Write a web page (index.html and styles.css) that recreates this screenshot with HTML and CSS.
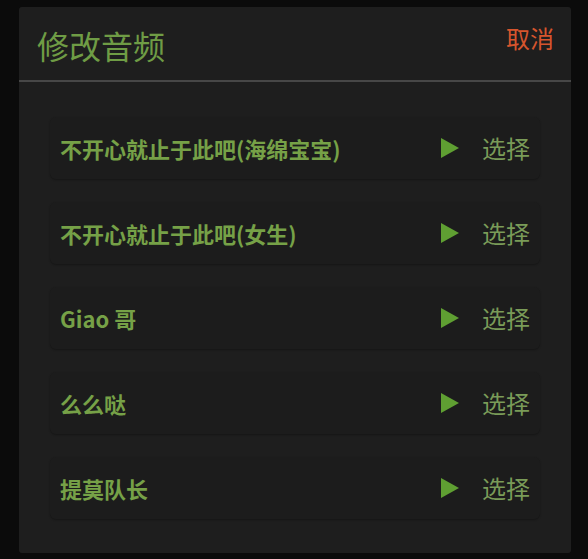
FILE: index.html
```html
<!DOCTYPE html>
<html lang="zh-CN">
<head>
<meta charset="utf-8">
<title>修改音频</title>
<link rel="stylesheet" href="styles.css">
</head>
<body>
<div class="dialog">
  <div class="dialog-header">
    <h1 class="dialog-title">修改音频</h1>
    <span class="dialog-cancel">取消</span>
  </div>
  <ul class="sound-list">
    <li class="sound-item">
      <span class="sound-name">不开心就止于此吧(海绵宝宝)</span>
      <span class="play"><svg width="18" height="20" viewBox="0 0 18 20"><path d="M0 0 L18 10 L0 20 Z" fill="#5f9f32"/></svg></span>
      <span class="choose">选择</span>
    </li>
    <li class="sound-item">
      <span class="sound-name">不开心就止于此吧(女生)</span>
      <span class="play"><svg width="18" height="20" viewBox="0 0 18 20"><path d="M0 0 L18 10 L0 20 Z" fill="#5f9f32"/></svg></span>
      <span class="choose">选择</span>
    </li>
    <li class="sound-item">
      <span class="sound-name">Giao 哥</span>
      <span class="play"><svg width="18" height="20" viewBox="0 0 18 20"><path d="M0 0 L18 10 L0 20 Z" fill="#5f9f32"/></svg></span>
      <span class="choose">选择</span>
    </li>
    <li class="sound-item">
      <span class="sound-name">么么哒</span>
      <span class="play"><svg width="18" height="20" viewBox="0 0 18 20"><path d="M0 0 L18 10 L0 20 Z" fill="#5f9f32"/></svg></span>
      <span class="choose">选择</span>
    </li>
    <li class="sound-item">
      <span class="sound-name">提莫队长</span>
      <span class="play"><svg width="18" height="20" viewBox="0 0 18 20"><path d="M0 0 L18 10 L0 20 Z" fill="#5f9f32"/></svg></span>
      <span class="choose">选择</span>
    </li>
  </ul>
</div>
</body>
</html>
```
FILE: styles.css
```css
html, body {
  margin: 0;
  padding: 0;
  background: #0b0b0b;
}

body {
  padding: 7px 17px 6px 19px;
  font-family: "Noto Sans CJK SC", "Noto Sans", sans-serif;
}

.dialog {
  background: #1e1e1e;
  border-radius: 3px;
  height: 546px;
  box-sizing: border-box;
  display: flex;
  flex-direction: column;
}

.dialog-header {
  height: 75px;
  display: flex;
  align-items: center;
  justify-content: space-between;
  padding: 0 17px 2px 18px;
  box-sizing: border-box;
  border-bottom: 2px solid #474747;
}

.dialog-title {
  margin: 0;
  font-size: 32px;
  font-weight: 400;
  color: #6f9c45;
  line-height: 1;
  margin-top: 4px;
}

.dialog-cancel {
  font-size: 24px;
  color: #d6552d;
  line-height: 1;
  margin-top: -10px;
}

.sound-list {
  list-style: none;
  margin: 0;
  padding: 35px 31px 0 31px;
  display: flex;
  flex-direction: column;
  gap: 23px;
}

/* rows sit just a shade darker than the dialog */
.sound-item {
  height: 62px;
  display: flex;
  align-items: center;
  padding: 0 10px 0 10px;
  background: #1c1c1c;
  border-radius: 6px;
  box-shadow: 0 1px 2px rgba(0, 0, 0, 0.3);
}

.sound-name {
  flex: 1;
  font-size: 22px;
  font-weight: 700;
  color: #76a147;
  line-height: 1;
}

.play {
  display: flex;
  width: 18px;
  height: 20px;
  margin-right: 23px;
}

.choose {
  font-size: 24px;
  color: #7a9b58;
  line-height: 1;
}
```
